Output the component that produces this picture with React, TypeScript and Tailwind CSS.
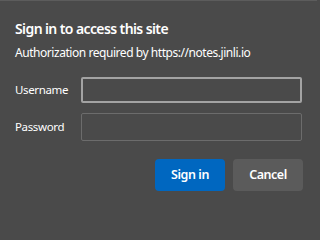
import React from 'react';

export default function App() {
  return (
    <div className="min-h-screen bg-[#4a4a4a]">
      <div className="w-[317px] h-[204px] bg-[#4a4a4a] border-t border-[#5c5c5c] font-['Noto_Sans','Open_Sans',sans-serif] text-white">
        <div className="pl-[15px] pr-[14px] pt-[18px]">
          <h1 className="text-[14px] font-semibold leading-[20px] tracking-[-0.6px]">Sign in to access this site</h1>
          <p className="mt-[6px] text-[12px] leading-[16px] tracking-[-0.45px]">
            Authorization required by https://notes.jinli.io
          </p>

          <form className="mt-[16px] flex flex-col gap-[10px]" onSubmit={(e) => e.preventDefault()}>
            <div className="flex items-center">
              <label className="w-[66px] text-[11.5px] tracking-[-0.35px]">Username</label>
              <input
                type="text"
                className="h-[26px] w-[221px] bg-transparent border-2 border-[#a3a3a3] rounded-[2px] outline-none px-2 text-[12px]"
              />
            </div>
            <div className="flex items-center">
              <label className="w-[66px] text-[11.5px] tracking-[-0.35px]">Password</label>
              <input
                type="password"
                className="h-[28px] w-[221px] bg-transparent border border-[#6c6c6c] rounded-[2px] outline-none px-2 text-[12px]"
              />
            </div>

            <div className="mt-[8px] flex justify-end gap-[8px]">
              <button type="submit" className="w-[70px] h-[32px] rounded-[4px] bg-[#0067c0] text-[12.5px] font-semibold tracking-[-0.4px]">
                Sign in
              </button>
              <button type="button" className="w-[70px] h-[32px] rounded-[4px] bg-[#5b5b5b] text-[12.5px] font-semibold tracking-[-0.5px]">
                Cancel
              </button>
            </div>
          </form>
        </div>
      </div>
    </div>
  );
}
